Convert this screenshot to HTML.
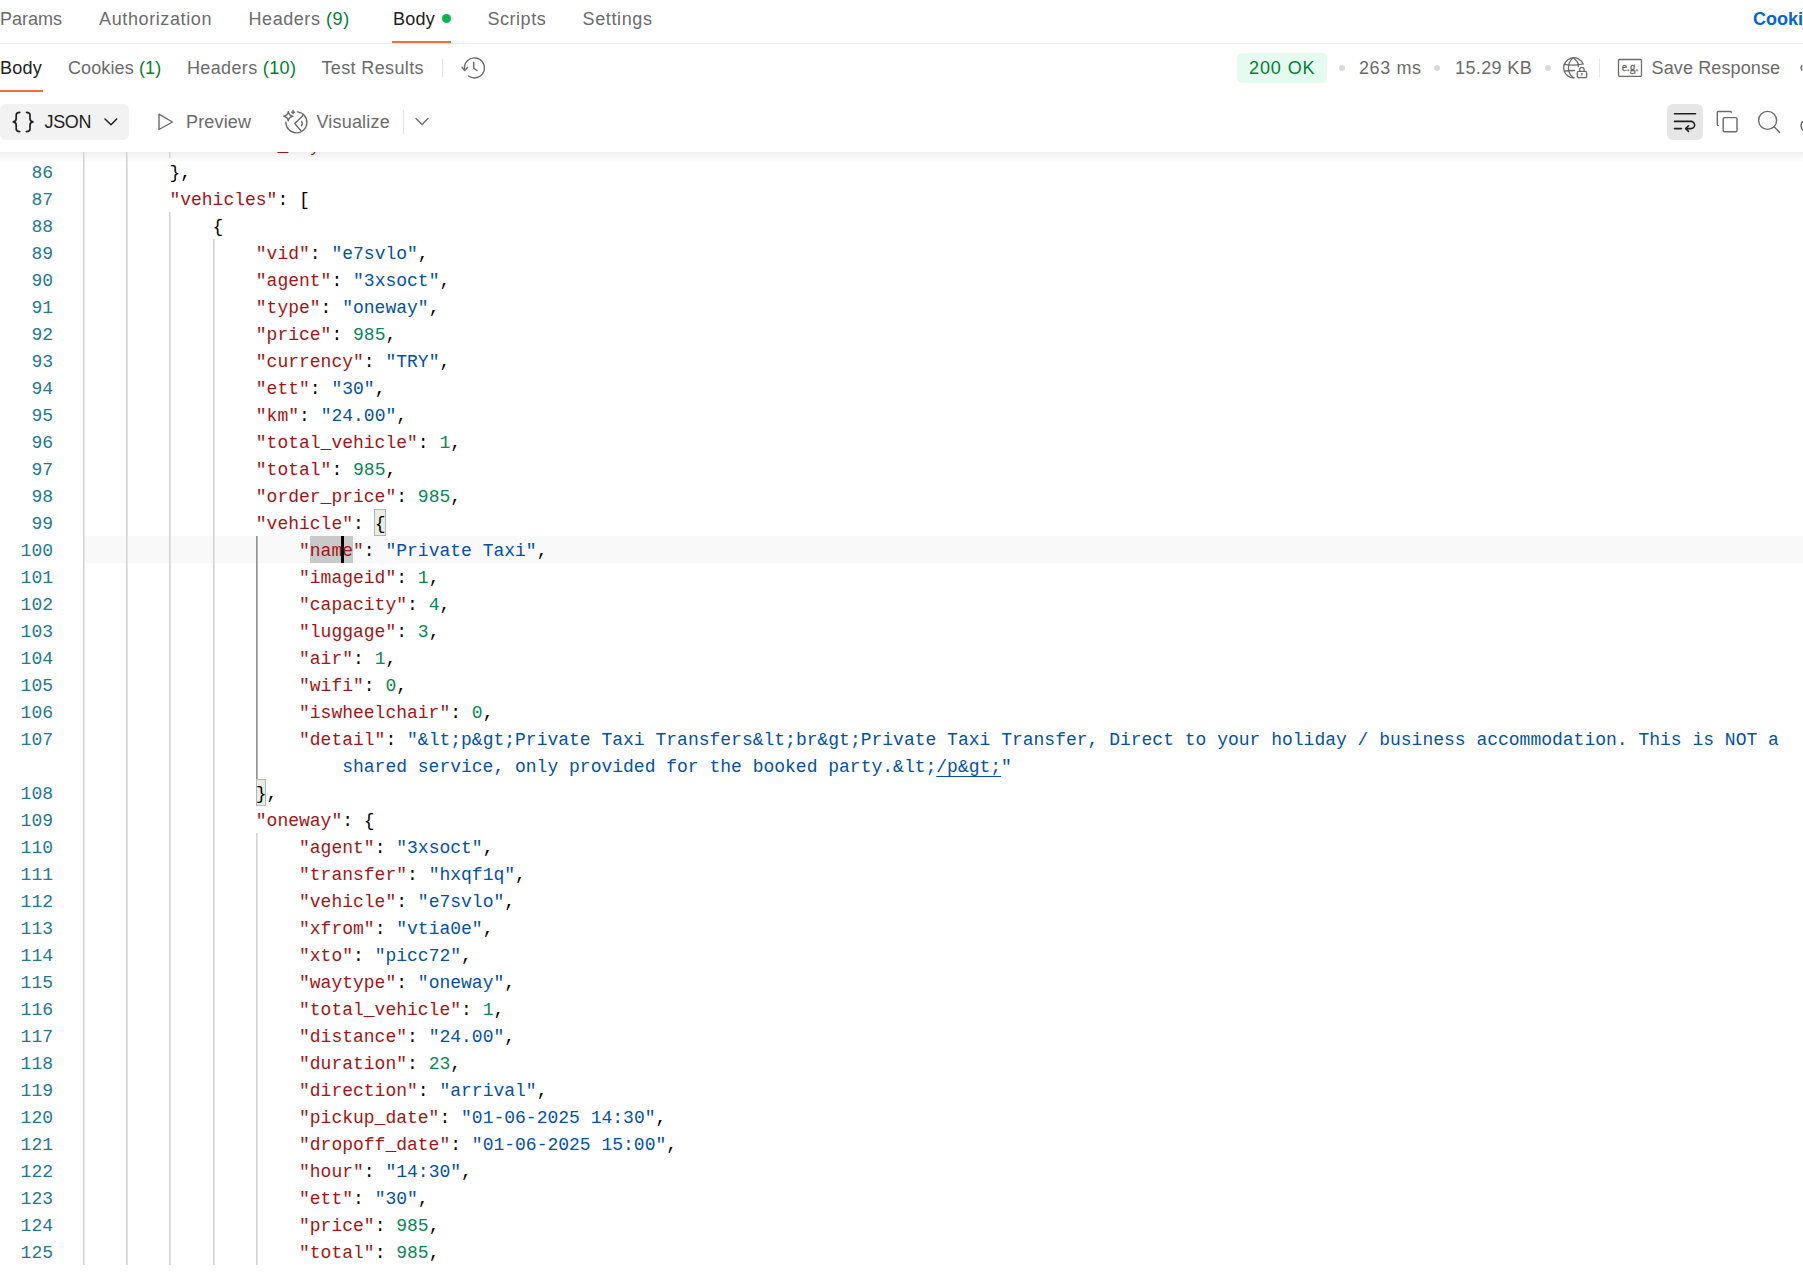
<!DOCTYPE html>
<html><head><meta charset="utf-8">
<style>
html,body{margin:0;padding:0;}
body{width:1803px;height:1272px;overflow:hidden;background:#fff;position:relative;font-family:"Liberation Sans",sans-serif;}
.t{position:absolute;font-size:18px;line-height:20px;white-space:nowrap;color:#6b6b6b;}
.dark{color:#212121;}
.cnt{color:#007f31;}
.hline{position:absolute;left:0;width:1803px;height:1px;background:#ededed;}
.ul{position:absolute;height:2px;background:#ff6c37;}
.dot{position:absolute;width:6px;height:6px;border-radius:50%;background:#d9d9d9;}
.vsep{position:absolute;width:1px;background:#e6e6e6;}
#editor{position:absolute;left:0;top:152px;width:1803px;height:1113px;overflow:hidden;}
#ed-inner{position:absolute;left:0;top:-152px;width:1803px;height:1272px;}
.ln{position:absolute;left:0;width:53px;text-align:right;font-family:"Liberation Mono",monospace;font-size:18px;line-height:27px;height:27px;color:#237893;}
.cl{position:absolute;font-family:"Liberation Mono",monospace;font-size:18px;line-height:27px;height:27px;white-space:pre;color:#000;}
.g{position:absolute;width:2px;height:27px;background:linear-gradient(to right,#d3d3d3 50%,#e5e5e5 50%);}
.ga{background:linear-gradient(to right,#939393 50%,#b8b8b8 50%);}
.k{color:#a31515;}
.s{color:#0451a5;}
.n{color:#098658;}
.p{color:#000;}
.su{color:#0451a5;text-decoration:underline;text-underline-offset:4px;text-decoration-skip-ink:none;}
.ksel{color:#a31515;background:#c9c9c9;}
.ksel2{color:#a31515;background:#c9c9c9;}
.bm{outline:1px solid #b9b9b9;outline-offset:-1px;background:#e5efe1;}
#curline{position:absolute;left:85px;width:1718px;height:27px;background:#f9f9f9;}
#shadow2{position:absolute;left:0;top:152px;width:1803px;height:10px;background:linear-gradient(#efefef,rgba(255,255,255,0));}
.sel{position:absolute;height:27px;background:#c9c9c9;}
.bmx{position:absolute;height:27px;box-sizing:border-box;border:1px solid #b5b5b5;background:#e7eee4;}
#cursor{position:absolute;width:3px;height:27px;background:#000;}
</style></head><body>
<!-- row 1 tabs -->
<div class="t" style="left:0;top:9px;">Params</div>
<div class="t" style="left:99px;top:9px;letter-spacing:0.62px">Authorization</div>
<div class="t" style="left:248.5px;top:9px;letter-spacing:0.56px">Headers <span class="cnt">(9)</span></div>
<div class="t dark" style="left:393px;top:9px;letter-spacing:0.23px">Body</div>
<div style="position:absolute;left:442px;top:14px;width:9px;height:9px;border-radius:50%;background:#0cb550"></div>
<div class="t" style="left:487.5px;top:9px;letter-spacing:0.53px">Scripts</div>
<div class="t" style="left:582.5px;top:9px;letter-spacing:0.63px">Settings</div>
<div class="t" style="left:1753px;top:9px;color:#0265d2;font-weight:bold;">Cookies</div>
<div class="ul" style="left:392px;top:41px;width:59px;"></div>
<div class="hline" style="top:43px;"></div>
<!-- row 2 -->
<div class="t dark" style="left:0;top:58px;letter-spacing:0.23px">Body</div>
<div class="ul" style="left:0;top:90px;width:43px;"></div>
<div class="t" style="left:68px;top:58px;letter-spacing:0.11px">Cookies <span class="cnt">(1)</span></div>
<div class="t" style="left:187px;top:58px;letter-spacing:0.35px">Headers <span class="cnt">(10)</span></div>
<div class="t" style="left:321.5px;top:58px;letter-spacing:0.37px">Test Results</div>
<div class="vsep" style="left:442px;top:59px;height:18px;"></div>
<div style="position:absolute;left:1237px;top:53px;width:90px;height:30px;border-radius:5px;background:#e5fbef;"></div>
<div class="t" style="left:1249px;top:58px;color:#007f31;letter-spacing:0.9px">200 OK</div>
<div class="dot" style="left:1339px;top:65px;"></div>
<div class="t" style="left:1359px;top:58px;letter-spacing:0.6px">263 ms</div>
<div class="dot" style="left:1434px;top:65px;"></div>
<div class="t" style="left:1455px;top:58px;letter-spacing:0.37px">15.29 KB</div>
<div class="dot" style="left:1545px;top:65px;"></div>
<div class="vsep" style="left:1599px;top:59px;height:18px;"></div>
<div class="t" style="left:1651.5px;top:58px;letter-spacing:0.12px">Save Response</div>
<!-- row 3 -->
<div style="position:absolute;left:0;top:104px;width:129px;height:36px;border-radius:6px;background:#f2f2f2;"></div>
<div class="t dark" style="left:44.5px;top:112px;letter-spacing:-0.37px">JSON</div>
<div class="t" style="left:186px;top:112px;letter-spacing:0.17px">Preview</div>
<div class="t" style="left:316.5px;top:112px;letter-spacing:0.18px">Visualize</div>
<div class="vsep" style="left:403px;top:110px;height:24px;"></div>
<div style="position:absolute;left:1667px;top:104px;width:36px;height:36px;border-radius:6px;background:#e6e6e6;"></div>

<svg width="1803" height="152" style="position:absolute;left:0;top:0" fill="none" stroke-linecap="round" stroke-linejoin="round">
 <!-- history -->
 <g stroke="#6b6b6b" stroke-width="1.4">
  <path d="M468.55 76 A10 10 0 1 0 464.42 68.5"/>
  <path d="M462 67.3 L464.6 70.6 L467.7 67.3"/>
  <path d="M473.7 62.3 L473.8 68.4 L477 70.5"/>
 </g>
 <!-- globe lock -->
 <g stroke="#6b6b6b" stroke-width="1.3">
  <path d="M1583.2 64.2 A10.1 10.1 0 1 0 1574.3 77.9"/>
  <path d="M1573.2 57.8 C1566.8 63 1566.8 73 1573.5 77.8"/>
  <path d="M1573.2 57.8 C1577.8 61 1578.6 64.5 1578.3 66.5"/>
  <path d="M1564 64.2 C1568 65.4 1577 65.4 1582 64.2"/>
  <path d="M1564.2 71.2 C1566 70.7 1568.5 70.5 1574.5 70.5"/>
  <rect x="1577.3" y="71.4" width="9.3" height="6.3" rx="1.2"/>
  <path d="M1579.7 71.2 V69.5 A2.2 2.2 0 0 1 1584.1 69.5 V71.2"/>
  <path d="M1581.9 73.5 V75"/>
 </g>
 <!-- e.g. -->
 <rect x="1618.5" y="59.5" width="23" height="16.8" rx="1" stroke="#6b6b6b" stroke-width="1.3"/>
 <text x="1630" y="71" text-anchor="middle" font-family="Liberation Serif" font-size="11.5" font-weight="normal" stroke="#6b6b6b" stroke-width="0.35" fill="#6b6b6b">e.g.</text>
 <!-- partial icon right row2 -->
 <path d="M1802 65.5 A3 3 0 0 0 1802 70" stroke="#6b6b6b" stroke-width="1.4"/>
 <!-- braces -->
 <g stroke="#212121" stroke-width="1.7">
  <path d="M19.7 112.3 C17 112.3 16.2 113.3 16.2 115 V118.5 C16.2 120.5 15 121.6 13.2 121.8 C15 122 16.2 123.2 16.2 125.2 V129 C16.2 130.7 17 131.6 19.7 131.6"/>
  <path d="M26.5 112.3 C29.2 112.3 30 113.3 30 115 V118.5 C30 120.5 31.2 121.6 33 121.8 C31.2 122 30 123.2 30 125.2 V129 C30 130.7 29.2 131.6 26.5 131.6"/>
 </g>
 <!-- chevron JSON -->
 <path d="M105 119 L111 124.7 L116.7 119" stroke="#212121" stroke-width="1.5"/>
 <!-- play -->
 <path d="M159 114.2 L159 129.5 L172.4 122 Z" stroke="#6b6b6b" stroke-width="1.4"/>
 <!-- visualize -->
 <g stroke="#6b6b6b" stroke-width="1.4">
  <path d="M285.9 122.2 A10.5 10.5 0 1 0 297.4 111.9"/>
  <path d="M303 115.5 L294.8 123.5 L300.9 130.8"/>
  <path d="M301.5 121.4 C302.5 122.8 302.5 124.5 301.5 125.8"/>
  <path d="M288.3 111.6 C288.8 114.6 289.8 115.7 292.9 116.2 C289.8 116.7 288.8 117.8 288.3 120.8 C287.8 117.8 286.8 116.7 283.7 116.2 C286.8 115.7 287.8 114.6 288.3 111.6 Z"/>
  <path d="M293.1 110.2 Q293.5 111.8 295.1 112.2 Q293.5 112.6 293.1 114.2 Q292.7 112.6 291.1 112.2 Q292.7 111.8 293.1 110.2 Z" fill="#6b6b6b" stroke-width="0.6"/>
 </g>
 <!-- chevron vis -->
 <path d="M416 118.5 L422 124.5 L428 118.5" stroke="#6b6b6b" stroke-width="1.4"/>
 <!-- wrap -->
 <g stroke="#212121" stroke-width="1.6">
  <path d="M1674.5 113.8 H1695.5"/>
  <path d="M1674.5 121.4 H1691 A3.6 3.6 0 0 1 1691 128.6 H1686"/>
  <path d="M1688.5 125.8 L1685.7 128.6 L1688.5 131.4"/>
  <path d="M1674.5 128.6 H1681.5"/>
 </g>
 <!-- copy -->
 <g stroke="#6b6b6b" stroke-width="1.4">
  <path d="M1731.2 112.5 V112 A0.8 0.8 0 0 0 1730.4 111.5 H1718.3 A1 1 0 0 0 1717.3 112.5 V124.6 A1 1 0 0 0 1718.3 125.6"/>
  <rect x="1723.2" y="117.6" width="13.8" height="14.2" rx="1.2"/>
 </g>
 <!-- search -->
 <g stroke="#6b6b6b" stroke-width="1.4">
  <circle cx="1767.6" cy="120.4" r="9"/>
  <path d="M1774.3 127 L1779.6 132.4"/>
 </g>
 <path d="M1803 121.5 C1800.5 122.5 1800.5 129 1803 130" stroke="#6b6b6b" stroke-width="1.4"/>
</svg>

<div id="editor"><div id="ed-inner">
<div id="curline" style="top:536px"></div>
<div id="shadow2"></div>
<div class="sel" style="left:309.8px;top:536px;width:43.2px"></div>
<div class="bmx" style="left:374.2px;top:509px;width:11.6px"></div>
<div class="bmx" style="left:256.0px;top:779px;width:10.4px"></div>
<div class="g" style="left:83px;top:131px"></div>
<div class="g" style="left:126px;top:131px"></div>
<div class="g" style="left:169px;top:131px"></div>
<div class="g" style="left:83px;top:158px"></div>
<div class="g" style="left:126px;top:158px"></div>
<div class="g" style="left:83px;top:185px"></div>
<div class="g" style="left:126px;top:185px"></div>
<div class="g" style="left:83px;top:212px"></div>
<div class="g" style="left:126px;top:212px"></div>
<div class="g" style="left:169px;top:212px"></div>
<div class="g" style="left:83px;top:239px"></div>
<div class="g" style="left:126px;top:239px"></div>
<div class="g" style="left:169px;top:239px"></div>
<div class="g" style="left:213px;top:239px"></div>
<div class="g" style="left:83px;top:266px"></div>
<div class="g" style="left:126px;top:266px"></div>
<div class="g" style="left:169px;top:266px"></div>
<div class="g" style="left:213px;top:266px"></div>
<div class="g" style="left:83px;top:293px"></div>
<div class="g" style="left:126px;top:293px"></div>
<div class="g" style="left:169px;top:293px"></div>
<div class="g" style="left:213px;top:293px"></div>
<div class="g" style="left:83px;top:320px"></div>
<div class="g" style="left:126px;top:320px"></div>
<div class="g" style="left:169px;top:320px"></div>
<div class="g" style="left:213px;top:320px"></div>
<div class="g" style="left:83px;top:347px"></div>
<div class="g" style="left:126px;top:347px"></div>
<div class="g" style="left:169px;top:347px"></div>
<div class="g" style="left:213px;top:347px"></div>
<div class="g" style="left:83px;top:374px"></div>
<div class="g" style="left:126px;top:374px"></div>
<div class="g" style="left:169px;top:374px"></div>
<div class="g" style="left:213px;top:374px"></div>
<div class="g" style="left:83px;top:401px"></div>
<div class="g" style="left:126px;top:401px"></div>
<div class="g" style="left:169px;top:401px"></div>
<div class="g" style="left:213px;top:401px"></div>
<div class="g" style="left:83px;top:428px"></div>
<div class="g" style="left:126px;top:428px"></div>
<div class="g" style="left:169px;top:428px"></div>
<div class="g" style="left:213px;top:428px"></div>
<div class="g" style="left:83px;top:455px"></div>
<div class="g" style="left:126px;top:455px"></div>
<div class="g" style="left:169px;top:455px"></div>
<div class="g" style="left:213px;top:455px"></div>
<div class="g" style="left:83px;top:482px"></div>
<div class="g" style="left:126px;top:482px"></div>
<div class="g" style="left:169px;top:482px"></div>
<div class="g" style="left:213px;top:482px"></div>
<div class="g" style="left:83px;top:509px"></div>
<div class="g" style="left:126px;top:509px"></div>
<div class="g" style="left:169px;top:509px"></div>
<div class="g" style="left:213px;top:509px"></div>
<div class="g" style="left:83px;top:536px"></div>
<div class="g" style="left:126px;top:536px"></div>
<div class="g" style="left:169px;top:536px"></div>
<div class="g" style="left:213px;top:536px"></div>
<div class="g ga" style="left:256px;top:536px"></div>
<div class="g" style="left:83px;top:563px"></div>
<div class="g" style="left:126px;top:563px"></div>
<div class="g" style="left:169px;top:563px"></div>
<div class="g" style="left:213px;top:563px"></div>
<div class="g ga" style="left:256px;top:563px"></div>
<div class="g" style="left:83px;top:590px"></div>
<div class="g" style="left:126px;top:590px"></div>
<div class="g" style="left:169px;top:590px"></div>
<div class="g" style="left:213px;top:590px"></div>
<div class="g ga" style="left:256px;top:590px"></div>
<div class="g" style="left:83px;top:617px"></div>
<div class="g" style="left:126px;top:617px"></div>
<div class="g" style="left:169px;top:617px"></div>
<div class="g" style="left:213px;top:617px"></div>
<div class="g ga" style="left:256px;top:617px"></div>
<div class="g" style="left:83px;top:644px"></div>
<div class="g" style="left:126px;top:644px"></div>
<div class="g" style="left:169px;top:644px"></div>
<div class="g" style="left:213px;top:644px"></div>
<div class="g ga" style="left:256px;top:644px"></div>
<div class="g" style="left:83px;top:671px"></div>
<div class="g" style="left:126px;top:671px"></div>
<div class="g" style="left:169px;top:671px"></div>
<div class="g" style="left:213px;top:671px"></div>
<div class="g ga" style="left:256px;top:671px"></div>
<div class="g" style="left:83px;top:698px"></div>
<div class="g" style="left:126px;top:698px"></div>
<div class="g" style="left:169px;top:698px"></div>
<div class="g" style="left:213px;top:698px"></div>
<div class="g ga" style="left:256px;top:698px"></div>
<div class="g" style="left:83px;top:725px"></div>
<div class="g" style="left:126px;top:725px"></div>
<div class="g" style="left:169px;top:725px"></div>
<div class="g" style="left:213px;top:725px"></div>
<div class="g ga" style="left:256px;top:725px"></div>
<div class="g" style="left:83px;top:752px"></div>
<div class="g" style="left:126px;top:752px"></div>
<div class="g" style="left:169px;top:752px"></div>
<div class="g" style="left:213px;top:752px"></div>
<div class="g ga" style="left:256px;top:752px"></div>
<div class="g" style="left:83px;top:779px"></div>
<div class="g" style="left:126px;top:779px"></div>
<div class="g" style="left:169px;top:779px"></div>
<div class="g" style="left:213px;top:779px"></div>
<div class="g" style="left:83px;top:806px"></div>
<div class="g" style="left:126px;top:806px"></div>
<div class="g" style="left:169px;top:806px"></div>
<div class="g" style="left:213px;top:806px"></div>
<div class="g" style="left:83px;top:833px"></div>
<div class="g" style="left:126px;top:833px"></div>
<div class="g" style="left:169px;top:833px"></div>
<div class="g" style="left:213px;top:833px"></div>
<div class="g" style="left:256px;top:833px"></div>
<div class="g" style="left:83px;top:860px"></div>
<div class="g" style="left:126px;top:860px"></div>
<div class="g" style="left:169px;top:860px"></div>
<div class="g" style="left:213px;top:860px"></div>
<div class="g" style="left:256px;top:860px"></div>
<div class="g" style="left:83px;top:887px"></div>
<div class="g" style="left:126px;top:887px"></div>
<div class="g" style="left:169px;top:887px"></div>
<div class="g" style="left:213px;top:887px"></div>
<div class="g" style="left:256px;top:887px"></div>
<div class="g" style="left:83px;top:914px"></div>
<div class="g" style="left:126px;top:914px"></div>
<div class="g" style="left:169px;top:914px"></div>
<div class="g" style="left:213px;top:914px"></div>
<div class="g" style="left:256px;top:914px"></div>
<div class="g" style="left:83px;top:941px"></div>
<div class="g" style="left:126px;top:941px"></div>
<div class="g" style="left:169px;top:941px"></div>
<div class="g" style="left:213px;top:941px"></div>
<div class="g" style="left:256px;top:941px"></div>
<div class="g" style="left:83px;top:968px"></div>
<div class="g" style="left:126px;top:968px"></div>
<div class="g" style="left:169px;top:968px"></div>
<div class="g" style="left:213px;top:968px"></div>
<div class="g" style="left:256px;top:968px"></div>
<div class="g" style="left:83px;top:995px"></div>
<div class="g" style="left:126px;top:995px"></div>
<div class="g" style="left:169px;top:995px"></div>
<div class="g" style="left:213px;top:995px"></div>
<div class="g" style="left:256px;top:995px"></div>
<div class="g" style="left:83px;top:1022px"></div>
<div class="g" style="left:126px;top:1022px"></div>
<div class="g" style="left:169px;top:1022px"></div>
<div class="g" style="left:213px;top:1022px"></div>
<div class="g" style="left:256px;top:1022px"></div>
<div class="g" style="left:83px;top:1049px"></div>
<div class="g" style="left:126px;top:1049px"></div>
<div class="g" style="left:169px;top:1049px"></div>
<div class="g" style="left:213px;top:1049px"></div>
<div class="g" style="left:256px;top:1049px"></div>
<div class="g" style="left:83px;top:1076px"></div>
<div class="g" style="left:126px;top:1076px"></div>
<div class="g" style="left:169px;top:1076px"></div>
<div class="g" style="left:213px;top:1076px"></div>
<div class="g" style="left:256px;top:1076px"></div>
<div class="g" style="left:83px;top:1103px"></div>
<div class="g" style="left:126px;top:1103px"></div>
<div class="g" style="left:169px;top:1103px"></div>
<div class="g" style="left:213px;top:1103px"></div>
<div class="g" style="left:256px;top:1103px"></div>
<div class="g" style="left:83px;top:1130px"></div>
<div class="g" style="left:126px;top:1130px"></div>
<div class="g" style="left:169px;top:1130px"></div>
<div class="g" style="left:213px;top:1130px"></div>
<div class="g" style="left:256px;top:1130px"></div>
<div class="g" style="left:83px;top:1157px"></div>
<div class="g" style="left:126px;top:1157px"></div>
<div class="g" style="left:169px;top:1157px"></div>
<div class="g" style="left:213px;top:1157px"></div>
<div class="g" style="left:256px;top:1157px"></div>
<div class="g" style="left:83px;top:1184px"></div>
<div class="g" style="left:126px;top:1184px"></div>
<div class="g" style="left:169px;top:1184px"></div>
<div class="g" style="left:213px;top:1184px"></div>
<div class="g" style="left:256px;top:1184px"></div>
<div class="g" style="left:83px;top:1211px"></div>
<div class="g" style="left:126px;top:1211px"></div>
<div class="g" style="left:169px;top:1211px"></div>
<div class="g" style="left:213px;top:1211px"></div>
<div class="g" style="left:256px;top:1211px"></div>
<div class="g" style="left:83px;top:1238px"></div>
<div class="g" style="left:126px;top:1238px"></div>
<div class="g" style="left:169px;top:1238px"></div>
<div class="g" style="left:213px;top:1238px"></div>
<div class="g" style="left:256px;top:1238px"></div>
<div class="ln" style="top:133px">85</div>
<div class="ln" style="top:160px">86</div>
<div class="ln" style="top:187px">87</div>
<div class="ln" style="top:214px">88</div>
<div class="ln" style="top:241px">89</div>
<div class="ln" style="top:268px">90</div>
<div class="ln" style="top:295px">91</div>
<div class="ln" style="top:322px">92</div>
<div class="ln" style="top:349px">93</div>
<div class="ln" style="top:376px">94</div>
<div class="ln" style="top:403px">95</div>
<div class="ln" style="top:430px">96</div>
<div class="ln" style="top:457px">97</div>
<div class="ln" style="top:484px">98</div>
<div class="ln" style="top:511px">99</div>
<div class="ln" style="top:538px">100</div>
<div class="ln" style="top:565px">101</div>
<div class="ln" style="top:592px">102</div>
<div class="ln" style="top:619px">103</div>
<div class="ln" style="top:646px">104</div>
<div class="ln" style="top:673px">105</div>
<div class="ln" style="top:700px">106</div>
<div class="ln" style="top:727px">107</div>
<div class="ln" style="top:781px">108</div>
<div class="ln" style="top:808px">109</div>
<div class="ln" style="top:835px">110</div>
<div class="ln" style="top:862px">111</div>
<div class="ln" style="top:889px">112</div>
<div class="ln" style="top:916px">113</div>
<div class="ln" style="top:943px">114</div>
<div class="ln" style="top:970px">115</div>
<div class="ln" style="top:997px">116</div>
<div class="ln" style="top:1024px">117</div>
<div class="ln" style="top:1051px">118</div>
<div class="ln" style="top:1078px">119</div>
<div class="ln" style="top:1105px">120</div>
<div class="ln" style="top:1132px">121</div>
<div class="ln" style="top:1159px">122</div>
<div class="ln" style="top:1186px">123</div>
<div class="ln" style="top:1213px">124</div>
<div class="ln" style="top:1240px">125</div>
<div class="cl" style="top:133px;left:212.6px"><span class="k">"start_day"</span><span class="p">: </span><span class="n">1</span></div>
<div class="cl" style="top:160px;left:169.4px"><span class="p">}</span><span class="p">,</span></div>
<div class="cl" style="top:187px;left:169.4px"><span class="k">"vehicles"</span><span class="p">: </span><span class="p">[</span></div>
<div class="cl" style="top:214px;left:212.6px"><span class="p">{</span></div>
<div class="cl" style="top:241px;left:255.8px"><span class="k">"vid"</span><span class="p">: </span><span class="s">"e7svlo"</span><span class="p">,</span></div>
<div class="cl" style="top:268px;left:255.8px"><span class="k">"agent"</span><span class="p">: </span><span class="s">"3xsoct"</span><span class="p">,</span></div>
<div class="cl" style="top:295px;left:255.8px"><span class="k">"type"</span><span class="p">: </span><span class="s">"oneway"</span><span class="p">,</span></div>
<div class="cl" style="top:322px;left:255.8px"><span class="k">"price"</span><span class="p">: </span><span class="n">985</span><span class="p">,</span></div>
<div class="cl" style="top:349px;left:255.8px"><span class="k">"currency"</span><span class="p">: </span><span class="s">"TRY"</span><span class="p">,</span></div>
<div class="cl" style="top:376px;left:255.8px"><span class="k">"ett"</span><span class="p">: </span><span class="s">"30"</span><span class="p">,</span></div>
<div class="cl" style="top:403px;left:255.8px"><span class="k">"km"</span><span class="p">: </span><span class="s">"24.00"</span><span class="p">,</span></div>
<div class="cl" style="top:430px;left:255.8px"><span class="k">"total_vehicle"</span><span class="p">: </span><span class="n">1</span><span class="p">,</span></div>
<div class="cl" style="top:457px;left:255.8px"><span class="k">"total"</span><span class="p">: </span><span class="n">985</span><span class="p">,</span></div>
<div class="cl" style="top:484px;left:255.8px"><span class="k">"order_price"</span><span class="p">: </span><span class="n">985</span><span class="p">,</span></div>
<div class="cl" style="top:511px;left:255.8px"><span class="k">"vehicle"</span><span class="p">: </span><span class="p">{</span></div>
<div class="cl" style="top:538px;left:299.0px"><span class="k">"name"</span><span class="p">: </span><span class="s">"Private Taxi"</span><span class="p">,</span></div>
<div class="cl" style="top:565px;left:299.0px"><span class="k">"imageid"</span><span class="p">: </span><span class="n">1</span><span class="p">,</span></div>
<div class="cl" style="top:592px;left:299.0px"><span class="k">"capacity"</span><span class="p">: </span><span class="n">4</span><span class="p">,</span></div>
<div class="cl" style="top:619px;left:299.0px"><span class="k">"luggage"</span><span class="p">: </span><span class="n">3</span><span class="p">,</span></div>
<div class="cl" style="top:646px;left:299.0px"><span class="k">"air"</span><span class="p">: </span><span class="n">1</span><span class="p">,</span></div>
<div class="cl" style="top:673px;left:299.0px"><span class="k">"wifi"</span><span class="p">: </span><span class="n">0</span><span class="p">,</span></div>
<div class="cl" style="top:700px;left:299.0px"><span class="k">"iswheelchair"</span><span class="p">: </span><span class="n">0</span><span class="p">,</span></div>
<div class="cl" style="top:727px;left:299.0px"><span class="k">"detail"</span><span class="p">: </span><span class="s">"&amp;lt;p&amp;gt;Private Taxi Transfers&amp;lt;br&amp;gt;Private Taxi Transfer, Direct to your holiday / business accommodation. This is NOT a</span></div>
<div class="cl" style="top:754px;left:342.2px"><span class="s">shared service, only provided for the booked party.&amp;lt;</span><span class="su">/p&amp;gt;</span><span class="s">"</span></div>
<div class="cl" style="top:781px;left:255.8px"><span class="p">}</span><span class="p">,</span></div>
<div class="cl" style="top:808px;left:255.8px"><span class="k">"oneway"</span><span class="p">: </span><span class="p">{</span></div>
<div class="cl" style="top:835px;left:299.0px"><span class="k">"agent"</span><span class="p">: </span><span class="s">"3xsoct"</span><span class="p">,</span></div>
<div class="cl" style="top:862px;left:299.0px"><span class="k">"transfer"</span><span class="p">: </span><span class="s">"hxqf1q"</span><span class="p">,</span></div>
<div class="cl" style="top:889px;left:299.0px"><span class="k">"vehicle"</span><span class="p">: </span><span class="s">"e7svlo"</span><span class="p">,</span></div>
<div class="cl" style="top:916px;left:299.0px"><span class="k">"xfrom"</span><span class="p">: </span><span class="s">"vtia0e"</span><span class="p">,</span></div>
<div class="cl" style="top:943px;left:299.0px"><span class="k">"xto"</span><span class="p">: </span><span class="s">"picc72"</span><span class="p">,</span></div>
<div class="cl" style="top:970px;left:299.0px"><span class="k">"waytype"</span><span class="p">: </span><span class="s">"oneway"</span><span class="p">,</span></div>
<div class="cl" style="top:997px;left:299.0px"><span class="k">"total_vehicle"</span><span class="p">: </span><span class="n">1</span><span class="p">,</span></div>
<div class="cl" style="top:1024px;left:299.0px"><span class="k">"distance"</span><span class="p">: </span><span class="s">"24.00"</span><span class="p">,</span></div>
<div class="cl" style="top:1051px;left:299.0px"><span class="k">"duration"</span><span class="p">: </span><span class="n">23</span><span class="p">,</span></div>
<div class="cl" style="top:1078px;left:299.0px"><span class="k">"direction"</span><span class="p">: </span><span class="s">"arrival"</span><span class="p">,</span></div>
<div class="cl" style="top:1105px;left:299.0px"><span class="k">"pickup_date"</span><span class="p">: </span><span class="s">"01-06-2025 14:30"</span><span class="p">,</span></div>
<div class="cl" style="top:1132px;left:299.0px"><span class="k">"dropoff_date"</span><span class="p">: </span><span class="s">"01-06-2025 15:00"</span><span class="p">,</span></div>
<div class="cl" style="top:1159px;left:299.0px"><span class="k">"hour"</span><span class="p">: </span><span class="s">"14:30"</span><span class="p">,</span></div>
<div class="cl" style="top:1186px;left:299.0px"><span class="k">"ett"</span><span class="p">: </span><span class="s">"30"</span><span class="p">,</span></div>
<div class="cl" style="top:1213px;left:299.0px"><span class="k">"price"</span><span class="p">: </span><span class="n">985</span><span class="p">,</span></div>
<div class="cl" style="top:1240px;left:299.0px"><span class="k">"total"</span><span class="p">: </span><span class="n">985</span><span class="p">,</span></div>
<div id="cursor" style="left:341px;top:536px"></div>
</div></div>
</body></html>
